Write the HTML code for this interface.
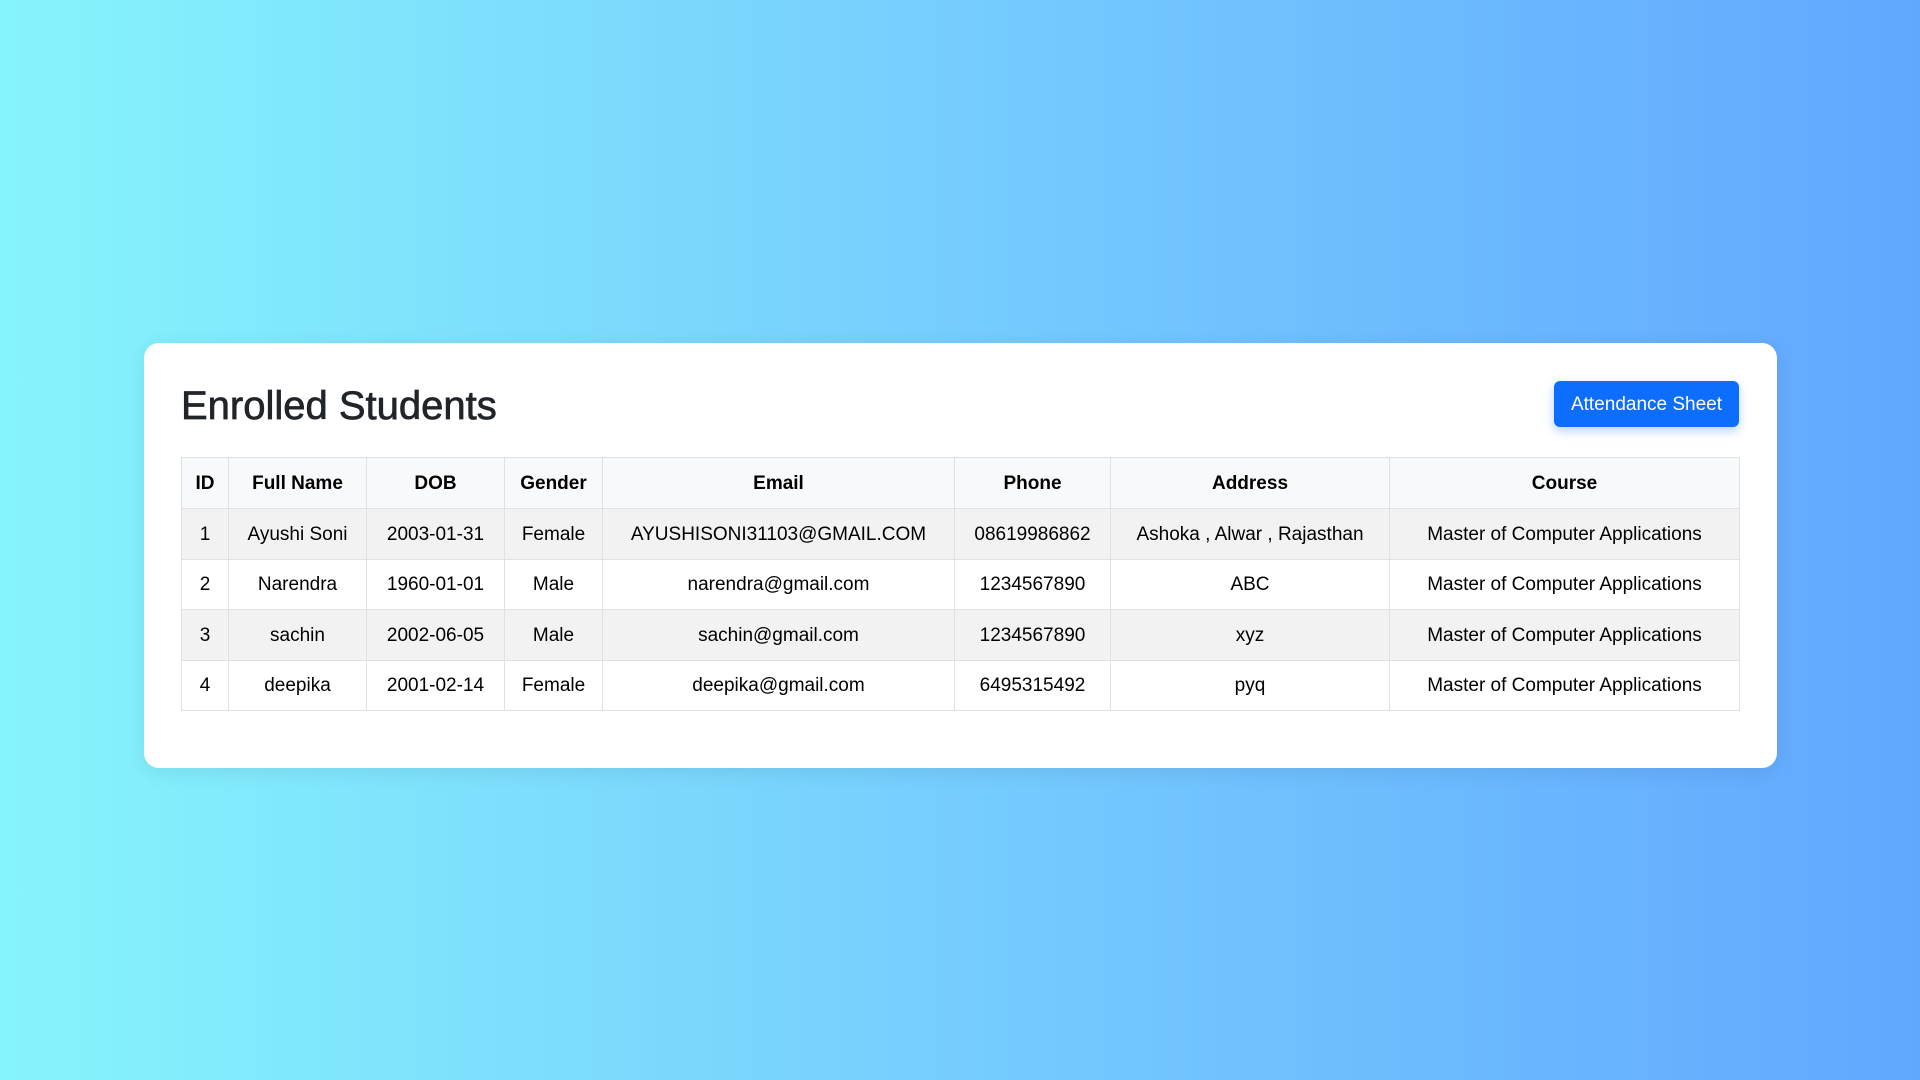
<!DOCTYPE html>
<html><head><style>
*{box-sizing:border-box;margin:0;padding:0}
html,body{width:1920px;height:1080px;overflow:hidden}
body{background:linear-gradient(90deg,#86f4fc 0%,#79d4fd 40%,#62a7ff 100%);font-family:"Liberation Sans",sans-serif;color:#212529;position:relative}
.card{position:absolute;left:144px;top:343px;width:1633px;height:425px;background:#fff;border-radius:15px;box-shadow:0 4px 20px rgba(0,0,0,.08)}
h2{position:absolute;left:37px;top:39px;font-size:40px;font-weight:500;line-height:48px;letter-spacing:0px;-webkit-text-stroke:0.7px #212529}
.btn{position:absolute;left:1410px;top:38px;width:185px;height:46px;background:#0d6efd;color:#fff;border-radius:6px;font-size:19px;line-height:48px;text-align:center;box-shadow:0 4px 10px rgba(13,110,253,.3)}
table{position:absolute;left:37px;top:114px;width:1558px;border-collapse:collapse;font-size:19px;table-layout:fixed}
td,th{border:1px solid #dee2e6;text-align:center;height:50.5px;padding:2px 0 0;white-space:nowrap;color:#000}
th{font-weight:bold;background:#f8f9fa;height:51px}
tr.s td{background:#f2f2f2}
</style></head><body>
<div class="card">
<h2>Enrolled Students</h2>
<div class="btn">Attendance Sheet</div>
<table>
<colgroup><col style="width:47px"><col style="width:138px"><col style="width:138px"><col style="width:98px"><col style="width:352px"><col style="width:156px"><col style="width:279px"><col style="width:350px"></colgroup>
<tr><th>ID</th><th>Full Name</th><th>DOB</th><th>Gender</th><th>Email</th><th>Phone</th><th>Address</th><th>Course</th></tr>
<tr class="s"><td>1</td><td>Ayushi Soni</td><td>2003-01-31</td><td>Female</td><td>AYUSHISONI31103@GMAIL.COM</td><td>08619986862</td><td>Ashoka , Alwar , Rajasthan</td><td>Master of Computer Applications</td></tr>
<tr><td>2</td><td>Narendra</td><td>1960-01-01</td><td>Male</td><td>narendra@gmail.com</td><td>1234567890</td><td>ABC</td><td>Master of Computer Applications</td></tr>
<tr class="s"><td>3</td><td>sachin</td><td>2002-06-05</td><td>Male</td><td>sachin@gmail.com</td><td>1234567890</td><td>xyz</td><td>Master of Computer Applications</td></tr>
<tr><td>4</td><td>deepika</td><td>2001-02-14</td><td>Female</td><td>deepika@gmail.com</td><td>6495315492</td><td>pyq</td><td>Master of Computer Applications</td></tr>
</table>
</div>
</body></html>
